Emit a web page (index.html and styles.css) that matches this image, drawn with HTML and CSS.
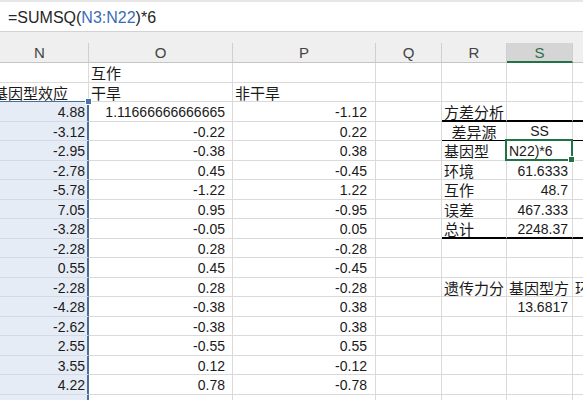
FILE: index.html
```html
<!DOCTYPE html>
<html lang="zh">
<head>
<meta charset="utf-8">
<title>SUMSQ</title>
<link rel="stylesheet" href="styles.css">
</head>
<body>
<div class="fbar"><span>=SUMSQ(</span><span class="ref">N3:N22</span><span>)*6</span></div>
<div class="band"></div>
<div class="sheet">
  <div class="h">N</div><div class="h">O</div><div class="h">P</div><div class="h">Q</div><div class="h">R</div><div class="h hact">S</div><div class="h"></div>

  <div class="c n"></div><div class="c o cj">互作</div><div class="c p"></div><div class="c"></div><div class="c"></div><div class="c"></div><div class="c"></div>
  <div class="c n cj seltop">基因型效应</div><div class="c o cj">干旱</div><div class="c p cj">非干旱</div><div class="c"></div><div class="c"></div><div class="c"></div><div class="c"></div>

  <div class="c n num sel first">4.88</div><div class="c o num">1.11666666666665</div><div class="c p num">-1.12</div><div class="c"></div><div class="c cj tb">方差分析</div><div class="c tb"></div><div class="c tb"></div>
  <div class="c n num sel">-3.12</div><div class="c o num">-0.22</div><div class="c p num">0.22</div><div class="c"></div><div class="c cj ctr b1">差异源</div><div class="c ctr b1">SS</div><div class="c b1"></div>
  <div class="c n num sel">-2.95</div><div class="c o num">-0.38</div><div class="c p num">0.38</div><div class="c"></div><div class="c cj">基因型</div><div class="c active">N22)*6</div><div class="c"></div>
  <div class="c n num sel">-2.78</div><div class="c o num">0.45</div><div class="c p num">-0.45</div><div class="c"></div><div class="c cj">环境</div><div class="c s num">61.6333</div><div class="c"></div>
  <div class="c n num sel">-5.78</div><div class="c o num">-1.22</div><div class="c p num">1.22</div><div class="c"></div><div class="c cj">互作</div><div class="c s num">48.7</div><div class="c"></div>
  <div class="c n num sel">7.05</div><div class="c o num">0.95</div><div class="c p num">-0.95</div><div class="c"></div><div class="c cj">误差</div><div class="c s num">467.333</div><div class="c"></div>
  <div class="c n num sel">-3.28</div><div class="c o num">-0.05</div><div class="c p num">0.05</div><div class="c"></div><div class="c cj tb">总计</div><div class="c s num tb">2248.37</div><div class="c tb"></div>
  <div class="c n num sel">-2.28</div><div class="c o num">0.28</div><div class="c p num">-0.28</div><div class="c"></div><div class="c"></div><div class="c"></div><div class="c"></div>
  <div class="c n num sel">0.55</div><div class="c o num">0.45</div><div class="c p num">-0.45</div><div class="c"></div><div class="c"></div><div class="c"></div><div class="c"></div>
  <div class="c n num sel">-2.28</div><div class="c o num">0.28</div><div class="c p num">-0.28</div><div class="c"></div><div class="c cj">遗传力分</div><div class="c cj">基因型方</div><div class="c cj">环境方差</div>
  <div class="c n num sel">-4.28</div><div class="c o num">-0.38</div><div class="c p num">0.38</div><div class="c"></div><div class="c"></div><div class="c s num">13.6817</div><div class="c"></div>
  <div class="c n num sel">-2.62</div><div class="c o num">-0.38</div><div class="c p num">0.38</div><div class="c"></div><div class="c"></div><div class="c"></div><div class="c"></div>
  <div class="c n num sel">2.55</div><div class="c o num">-0.55</div><div class="c p num">0.55</div><div class="c"></div><div class="c"></div><div class="c"></div><div class="c"></div>
  <div class="c n num sel">3.55</div><div class="c o num">0.12</div><div class="c p num">-0.12</div><div class="c"></div><div class="c"></div><div class="c"></div><div class="c"></div>
  <div class="c n num sel">4.22</div><div class="c o num">0.78</div><div class="c p num">-0.78</div><div class="c"></div><div class="c"></div><div class="c"></div><div class="c"></div>
  <div class="c n num sel">2.72</div><div class="c o num">-0.22</div><div class="c p num">0.22</div><div class="c"></div><div class="c"></div><div class="c"></div><div class="c"></div>
</div>
</body>
</html>
```

FILE: styles.css
```css
html, body {
  margin: 0;
  padding: 0;
  background: #ffffff;
  overflow: hidden;
  width: 583px;
  height: 400px;
}

.fbar {
  box-sizing: border-box;
  height: 32px;
  border-top: 2px solid #e6e6e6;
  border-bottom: 1px solid #d2d2d2;
  padding-left: 8px;
  font-family: "Liberation Sans", Arial, sans-serif;
  font-size: 16px;
  line-height: 31px;
  color: #262626;
  white-space: nowrap;
  overflow: hidden;
}

.fbar .ref {
  color: #3b6cb7;
}

.band {
  height: 11px;
  background: #efefef;
}

.sheet {
  display: grid;
  grid-template-columns: 98px 144px 143px 66px 65px 66px 60px;
  grid-template-rows: 20px repeat(18, 19.5px);
  margin-left: -9px;
  font-family: "Liberation Sans", Arial, "Noto Sans CJK SC", sans-serif;
  font-size: 14px;
  color: #1a1a1a;
}

.h {
  box-sizing: border-box;
  background: #efefef;
  border-right: 1px solid #cfcfcf;
  border-bottom: 1px solid #c4c4c4;
  text-align: center;
  line-height: 20px;
  font-size: 15px;
  color: #444444;
}

.h.hact {
  background: #d5d5d5;
  border-bottom: 2px solid #217346;
  color: #2f6e48;
}

.c {
  box-sizing: border-box;
  position: relative;
  border-right: 1px solid #dadada;
  border-bottom: 1px solid #dadada;
  padding: 0 2px;
  line-height: 19px;
  white-space: nowrap;
  overflow: hidden;
}

.cj {
  font-family: "Noto Sans CJK SC", sans-serif;
  font-size: 15px;
  line-height: 19px;
}

.num {
  text-align: right;
  padding-top: 1px;
}

.ctr {
  text-align: center;
}

.n.num { padding-right: 3px; }
.o.num { padding-right: 7px; }
.p.num { padding-right: 8px; }
.s.num { padding-right: 4px; }

.sel {
  background: #e6ecf5;
  border-bottom-color: #d3dae4;
  border-right: 1px solid #4a6f98;
  box-shadow: inset -1px 0 0 #4a6f98;
  overflow: visible;
}

.seltop {
  border-bottom: 1px solid #4a6f98;
}

.sel.first::before {
  content: "";
  position: absolute;
  right: -4px;
  top: -4px;
  width: 5px;
  height: 5px;
  background: #4a73a8;
  border: 1px solid #ffffff;
  z-index: 3;
}

.tb {
  border-bottom: 2px solid #000000;
}

.b1 {
  border-bottom: 1px solid #000000;
}

.active {
  overflow: visible;
  padding-left: 2px;
  padding-top: 1px;
}

.active::after {
  content: "";
  position: absolute;
  left: -2px;
  top: -2px;
  right: -1px;
  bottom: -1px;
  border: 2px solid #217346;
  z-index: 2;
}

.active::before {
  content: "";
  position: absolute;
  right: -3px;
  bottom: -3px;
  width: 5px;
  height: 5px;
  background: #217346;
  border: 1px solid #ffffff;
  z-index: 3;
}
```
